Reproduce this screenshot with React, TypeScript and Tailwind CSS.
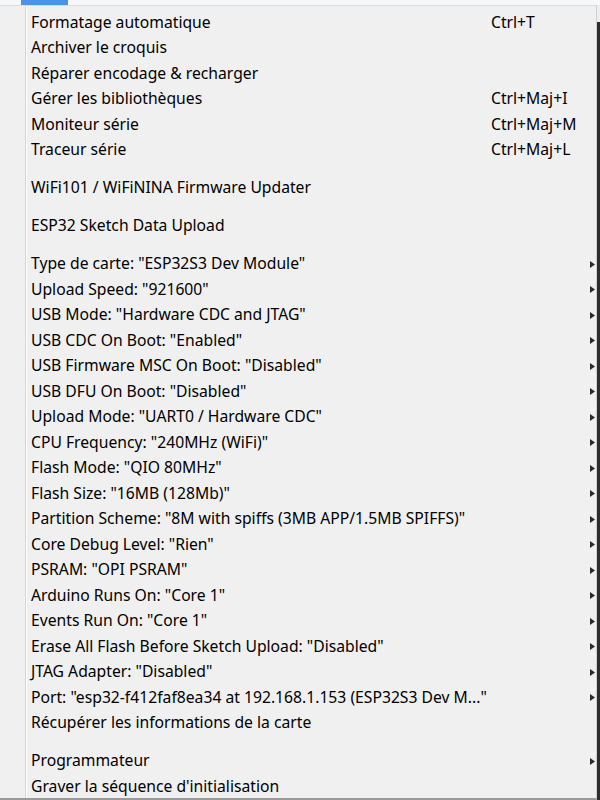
import React from "react";

type Item =
  | { type: "item"; label: string; shortcut?: string; sub?: boolean }
  | { type: "sep" };

const items: Item[] = [
  { type: "item", label: "Formatage automatique", shortcut: "Ctrl+T" },
  { type: "item", label: "Archiver le croquis" },
  { type: "item", label: "Réparer encodage & recharger" },
  { type: "item", label: "Gérer les bibliothèques", shortcut: "Ctrl+Maj+I" },
  { type: "item", label: "Moniteur série", shortcut: "Ctrl+Maj+M" },
  { type: "item", label: "Traceur série", shortcut: "Ctrl+Maj+L" },
  { type: "sep" },
  { type: "item", label: "WiFi101 / WiFiNINA Firmware Updater" },
  { type: "sep" },
  { type: "item", label: "ESP32 Sketch Data Upload" },
  { type: "sep" },
  { type: "item", label: 'Type de carte: "ESP32S3 Dev Module"', sub: true },
  { type: "item", label: 'Upload Speed: "921600"', sub: true },
  { type: "item", label: 'USB Mode: "Hardware CDC and JTAG"', sub: true },
  { type: "item", label: 'USB CDC On Boot: "Enabled"', sub: true },
  { type: "item", label: 'USB Firmware MSC On Boot: "Disabled"', sub: true },
  { type: "item", label: 'USB DFU On Boot: "Disabled"', sub: true },
  { type: "item", label: 'Upload Mode: "UART0 / Hardware CDC"', sub: true },
  { type: "item", label: 'CPU Frequency: "240MHz (WiFi)"', sub: true },
  { type: "item", label: 'Flash Mode: "QIO 80MHz"', sub: true },
  { type: "item", label: 'Flash Size: "16MB (128Mb)"', sub: true },
  { type: "item", label: 'Partition Scheme: "8M with spiffs (3MB APP/1.5MB SPIFFS)"', sub: true },
  { type: "item", label: 'Core Debug Level: "Rien"', sub: true },
  { type: "item", label: 'PSRAM: "OPI PSRAM"', sub: true },
  { type: "item", label: 'Arduino Runs On: "Core 1"', sub: true },
  { type: "item", label: 'Events Run On: "Core 1"', sub: true },
  { type: "item", label: 'Erase All Flash Before Sketch Upload: "Disabled"', sub: true },
  { type: "item", label: 'JTAG Adapter: "Disabled"', sub: true },
  { type: "item", label: 'Port: "esp32-f412faf8ea34 at 192.168.1.153 (ESP32S3 Dev M..."', sub: true },
  { type: "item", label: "Récupérer les informations de la carte" },
  { type: "sep" },
  { type: "item", label: "Programmateur", sub: true },
  { type: "item", label: "Graver la séquence d'initialisation" },
];

function Arrow() {
  return (
    <svg width="5" height="7" viewBox="0 0 5 7" className="block">
      <polygon points="0,0 5,3.5 0,7" fill="#2a2a2a" />
    </svg>
  );
}

export default function App() {
  return (
    <div
      className="w-[600px] h-[800px] overflow-hidden flex flex-col bg-[#f0f0f0]"
      style={{ fontFamily: '"Noto Sans", "Open Sans", sans-serif' }}
    >
      <div className="h-[5px] bg-[#f6f7f9] flex shrink-0">
        <div className="w-[21px]" />
        <div className="w-[47px] bg-[#4a93e6]" />
      </div>
      <div className="flex flex-1 min-h-0">
        <div className="w-[597px] flex flex-col border-t border-t-[#dcdcdc] border-b-2 border-b-[#9a9a9a] border-r border-r-[#d0d0d0] bg-[#f0f0f0] relative">
          <div className="absolute left-[25px] top-0 bottom-0 w-[2px] flex">
            <div className="w-px bg-[#d5d5d5]" />
            <div className="w-px bg-white" />
          </div>
          <div className="pt-[4px] flex flex-col">
            {items.map((it, i) =>
              it.type === "sep" ? (
                <div key={i} className="h-[12.5px]" />
              ) : (
                <div key={i} className="h-[25.5px] flex items-center text-[15.7px] text-black leading-none">
                  <div className="w-[31px] shrink-0" />
                  <div className="w-[460px] shrink-0 whitespace-nowrap">{it.label}</div>
                  <div className="whitespace-nowrap">{it.shortcut ?? ""}</div>
                  <div className="ml-auto pr-[1px]">{it.sub ? <Arrow /> : null}</div>
                </div>
              )
            )}
          </div>
        </div>
        <div className="w-[3px] flex flex-col">
          <div className="h-[17px] bg-[#eeeeee]" />
          <div className="flex-1 bg-[#2d2d2d]" />
        </div>
      </div>
    </div>
  );
}
